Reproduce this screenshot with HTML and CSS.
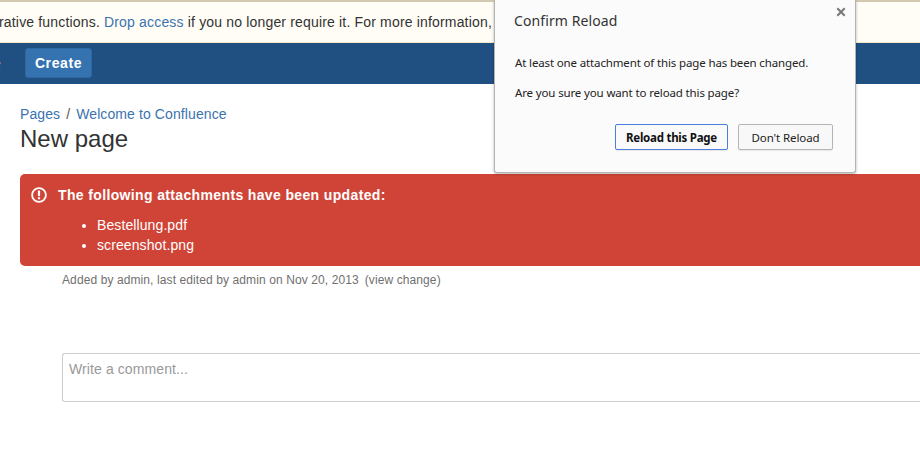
FILE: index.html
```html
<!DOCTYPE html>
<html lang="en">
<head>
<meta charset="utf-8">
<title>New page</title>
<link rel="stylesheet" href="styles.css">
</head>
<body>
<div class="banner"><span class="banner-text">rative functions. <a href="#">Drop access</a> if you no longer require it. For more information, r</span></div>
<nav class="nav"><span class="nav-clip">e</span><button class="create">Create</button></nav>
<main class="main">
  <div class="crumbs"><a href="#">Pages</a><span class="sep">/</span><a href="#">Welcome to Confluence</a></div>
  <h1 class="title">New page</h1>
  <section class="alert">
    <div class="alert-head">
      <svg class="alert-icon" viewBox="0 0 16 16" width="16" height="16"><circle cx="8" cy="8" r="6.9" fill="none" stroke="#fff" stroke-width="1.8"/><rect x="6.9" y="3.6" width="2.2" height="5.6" rx=".6" fill="#fff"/><rect x="6.9" y="10.2" width="2.2" height="2.1" rx=".5" fill="#fff"/></svg>
      <strong>The following attachments have been updated:</strong>
    </div>
    <ul class="alert-list"><li>Bestellung.pdf</li><li>screenshot.png</li></ul>
  </section>
  <div class="body-col">
    <p class="meta">Added by admin, last edited by admin on Nov 20, 2013<span class="change">(view change)</span></p>
    <div class="comment">Write a comment...</div>
  </div>
</main>
<div class="dialog">
  <div class="dialog-title">Confirm Reload</div>
  <svg class="dialog-close" viewBox="0 0 10 10" width="10" height="10"><path d="M1.3 1.3 8.7 8.7M8.7 1.3 1.3 8.7" stroke="#777" stroke-width="2" fill="none"/></svg>
  <p class="dialog-text">At least one attachment of this page has been changed.</p>
  <p class="dialog-text second">Are you sure you want to reload this page?</p>
  <div class="dialog-actions"><button class="btn primary">Reload this Page</button><button class="btn">Don't Reload</button></div>
</div>
</body>
</html>
```
FILE: styles.css
```css
* { box-sizing: border-box; }
html, body { margin: 0; padding: 0; }
body { width: 920px; height: 450px; overflow: hidden; background: #fff; font-family: "Liberation Sans", Arial, sans-serif; color: #333; position: relative; }
a { color: #3b73af; text-decoration: none; }
.banner { height: 43px; background: #fffdf6; border-top: 2px solid #d3c8b0; border-bottom: 1px solid #f5e9c9; font-size: 14px; line-height: 40px; white-space: nowrap; overflow: hidden; }
.banner-text { display: block; margin-left: -1px; letter-spacing: .17px; }
.nav { height: 41px; background: #205081; display: flex; align-items: flex-start; padding-top: 5px; }
.nav-clip { margin-left: -7px; flex: 0 0 32px; color: #e8c9a0; font-size: 14px; line-height: 30px; }
.create { width: 67px; height: 30px; padding: 0; border: 1px solid #2d67a4; border-radius: 3px; background: #3572b0; color: #fff; font: bold 14px "Liberation Sans", Arial, sans-serif; letter-spacing: .6px; }
.main { padding: 22px 0 0 20px; }
.crumbs { font-size: 14px; line-height: 16px; color: #333; letter-spacing: .1px; }
.sep { margin: 0 6px; color: #555; }
.title { margin: 2px 0 0; font-size: 24px; font-weight: 400; line-height: 30px; color: #333; }
.alert { margin-top: 20px; height: 92px; background: #d04437; border-radius: 5px 0 0 5px; color: #fff; padding: 12px 0 0 11px; font-size: 14px; }
.alert-head { display: flex; align-items: center; gap: 11px; height: 17px; }
.alert-head strong { font-size: 14px; letter-spacing: .36px; }
.alert-list { margin: 12px 0 0; padding: 0 0 0 66px; line-height: 20px; letter-spacing: .1px; }
.body-col { padding-left: 42px; }
.meta { margin: 6px 0 0; font-size: 12px; line-height: 16px; color: #707070; letter-spacing: .1px; }
.change { margin-left: 6px; }
.comment { margin-top: 65px; height: 49px; border: 1px solid #ccc; border-right: 0; border-radius: 3px 0 0 3px; padding: 6px; font-size: 14px; line-height: 18px; color: #999; letter-spacing: .1px; }
.dialog { position: absolute; left: 494px; top: 0; width: 362px; height: 173px; background: #fbfbfb; border: 1px solid #b4b4b4; border-top: 0; border-radius: 0 0 3px 3px; box-shadow: 0 1px 3px rgba(0,0,0,.3); font-family: "Noto Sans", "Open Sans", sans-serif; color: #222; }
.dialog-title { position: absolute; left: 19px; top: 11px; font-size: 14px; line-height: 20px; color: #333; letter-spacing: .1px; }
.dialog-close { position: absolute; left: 341px; top: 7px; }
.dialog-text { margin: 0; padding: 54px 0 0 20px; font-size: 11.5px; line-height: 17px; letter-spacing: -.14px; }
.second { padding-top: 13px; }
.dialog-actions { display: flex; gap: 10px; padding: 23px 0 0 120px; }
.btn { height: 26px; padding: 0; width: 95px; border: 1px solid #b5b5b5; border-radius: 2px; background: #f8f8f8; color: #222; font: 11.5px "Noto Sans", "Open Sans", sans-serif; letter-spacing: -.1px; box-shadow: 0 1px 1px rgba(0,0,0,.08); }
.primary { width: 113px; border-color: #4a7fdc; font-weight: 700; background: #fafafa; color: #111; letter-spacing: -.25px; }
```
